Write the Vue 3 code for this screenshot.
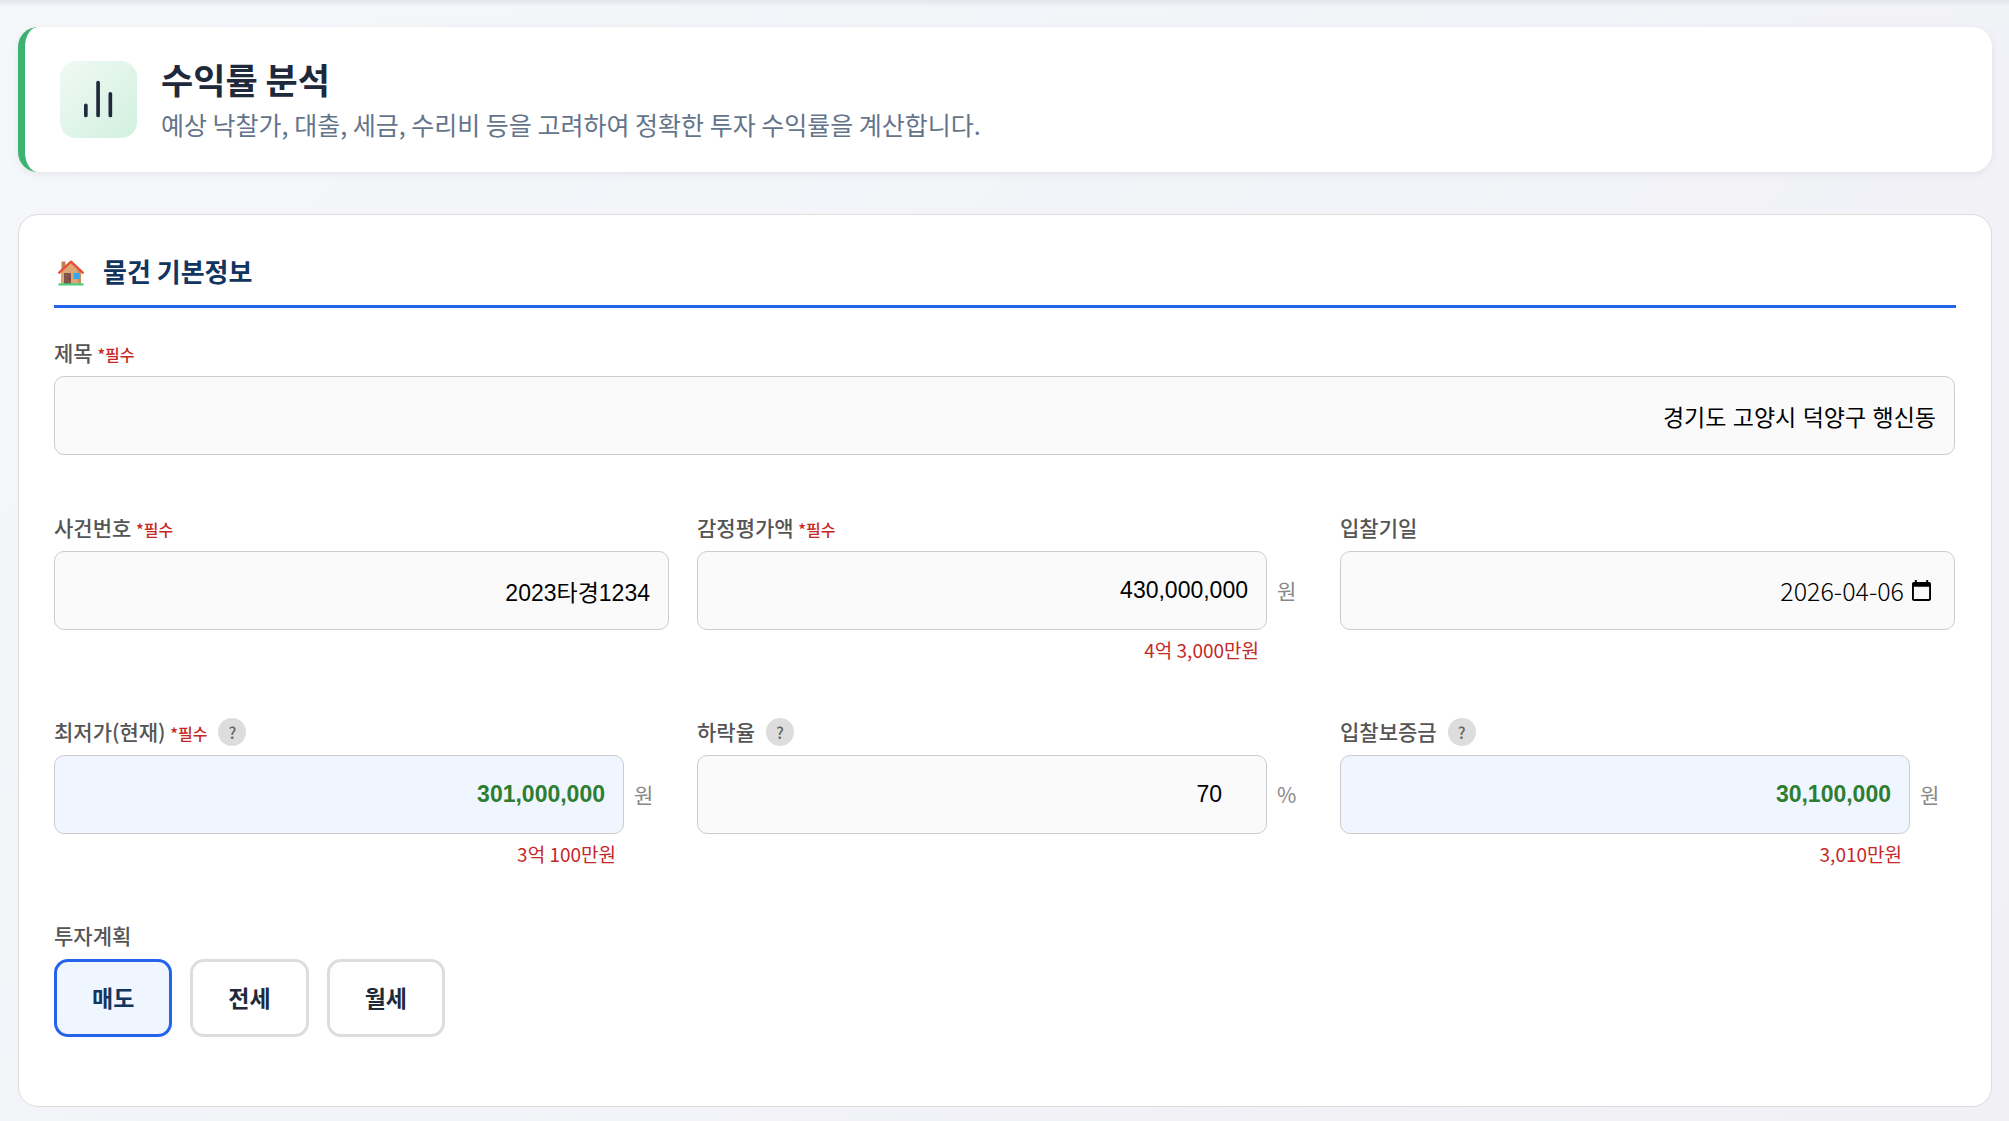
<script setup>
import { reactive, ref } from "vue";

// data
const form = reactive({
  title: "경기도 고양시 덕양구 행신동",
  caseNumber: "2023타경1234",
  appraisal: "430,000,000",
  bidDate: "2026-04-06",
  lowest: "301,000,000",
  rate: "70",
  deposit: "30,100,000",
});
const plans = ["매도", "전세", "월세"];
const plan = ref("매도");
</script>

<template>
  <main class="page">
    <header class="hero">
      <div class="hero__icon">
        <svg viewBox="0 0 24 24" aria-hidden="true">
          <path d="M5.800 19.800v-5M11.800 19.800V3.700M17.800 19.800V9.200" />
        </svg>
      </div>
      <div class="hero__body">
        <h1 class="hero__title">수익률 분석</h1>
        <p class="hero__text">
          예상 낙찰가, 대출, 세금, 수리비 등을 고려하여 정확한 투자 수익률을
          계산합니다.
        </p>
      </div>
    </header>

    <form class="card" @submit.prevent>
      <h2 class="card__title">
        <svg class="card__icon" viewBox="0 -4 26 30" aria-hidden="true">
          <path d="M3.500 1.500h4v9h-4z" fill="#b98555" />
          <path d="M3 11.500 13 2.500l10 9V24H3z" fill="#dda673" />
          <path d="M19 9h4v15h-3z" fill="#c98f60" />
          <path
            d="M1.300 12.700 13 1.700l11.700 11"
            fill="none"
            stroke="#e8503a"
            stroke-width="2.400"
            stroke-linecap="round"
            stroke-linejoin="round"
          />
          <path d="M6 13h7v11H6z" fill="#845349" />
          <circle cx="11.300" cy="18.500" r="0.800" fill="#4e3436" />
          <path d="M15.500 13h6v6h-6z" fill="#35a7ef" />
          <path d="M.5 23.300h25v2.200H.5z" fill="#4ad07d" />
        </svg>
        물건 기본정보
      </h2>

      <div class="grid">
        <div class="field field--wide">
          <div class="field__head">
            <label class="field__label" for="title"
              >제목 <span class="required">*필수</span></label
            >
          </div>
          <input id="title" v-model="form.title" class="input" type="text" />
        </div>

        <div class="field">
          <div class="field__head">
            <label class="field__label" for="case-number"
              >사건번호 <span class="required">*필수</span></label
            >
          </div>
          <input
            id="case-number"
            v-model="form.caseNumber"
            class="input"
            type="text"
          />
        </div>
        <div class="field">
          <div class="field__head">
            <label class="field__label" for="appraisal"
              >감정평가액 <span class="required">*필수</span></label
            >
          </div>
          <div class="field__row">
            <input
              id="appraisal"
              v-model="form.appraisal"
              class="input"
              type="text"
            />
            <span class="unit">원</span>
          </div>
          <p class="hint">4억 3,000만원</p>
        </div>
        <div class="field">
          <div class="field__head">
            <label class="field__label" for="bid-date">입찰기일</label>
          </div>
          <div class="input date">
            <input
              id="bid-date"
              v-model="form.bidDate"
              class="date__input"
              type="text"
            />
            <button class="date__button" type="button" aria-label="달력">
              <svg viewBox="0 0 20 22" aria-hidden="true">
                <path
                  d="M18 2h-1V0h-2v2H5V0H3v2H2C.9 2 0 2.900 0 4v16c0 1.100.9 2 2 2h16c1.100 0 2-.9 2-2V4c0-1.100-.9-2-2-2zm0 18H2V7h16z"
                />
              </svg>
            </button>
          </div>
        </div>

        <div class="field">
          <div class="field__head">
            <label class="field__label" for="lowest"
              >최저가(현재) <span class="required">*필수</span></label
            >
            <button class="help" type="button">?</button>
          </div>
          <div class="field__row">
            <input
              id="lowest"
              v-model="form.lowest"
              class="input input--result"
              type="text"
            />
            <span class="unit">원</span>
          </div>
          <p class="hint">3억 100만원</p>
        </div>
        <div class="field">
          <div class="field__head">
            <label class="field__label" for="rate">하락율</label>
            <button class="help" type="button">?</button>
          </div>
          <div class="field__row">
            <input
              id="rate"
              v-model="form.rate"
              class="input input--number"
              type="text"
            />
            <span class="unit">%</span>
          </div>
        </div>
        <div class="field">
          <div class="field__head">
            <label class="field__label" for="deposit">입찰보증금</label>
            <button class="help" type="button">?</button>
          </div>
          <div class="field__row">
            <input
              id="deposit"
              v-model="form.deposit"
              class="input input--result"
              type="text"
            />
            <span class="unit">원</span>
          </div>
          <p class="hint">3,010만원</p>
        </div>

        <div class="field field--wide">
          <div class="field__head">
            <span id="plan-label" class="field__label">투자계획</span>
          </div>
          <div class="plans" role="group" aria-labelledby="plan-label">
            <button
              v-for="item in plans"
              :key="item"
              class="plan"
              :class="{ 'plan--active': item === plan }"
              :aria-pressed="item === plan"
              type="button"
              @click="plan = item"
            >
              {{ item }}
            </button>
          </div>
        </div>
      </div>
    </form>
  </main>
</template>

<style>
body {
  background: linear-gradient(135deg, #f5f7fb, #f0f0f5);
}
</style>

<style scoped>
* {
  box-sizing: border-box;
}

.page {
  padding: 27px 17px 14px 18px;
  background: linear-gradient(#e2e6ec, transparent) no-repeat top / 100% 7px;
  color: #1e293b;
  font-family: "Noto Sans CJK KR", sans-serif;
}

.hero {
  display: flex;
  align-items: center;
  gap: 24px;
  padding: 26px 35px;
  border-left: 7px solid #3cb371;
  border-radius: 20px;
  background: #fff;
  box-shadow: 0 2px 9px rgba(0, 0, 0, 0.07);
}

.hero__icon {
  display: flex;
  align-items: center;
  justify-content: center;
  width: 77px;
  height: 77px;
  border-radius: 16px;
  background: linear-gradient(135deg, #f0faf4, #d1f0df);
}

.hero__icon svg {
  width: 49px;
  height: 49px;
  fill: none;
  stroke: #1e293b;
  stroke-width: 1.8;
  stroke-linecap: round;
}

.hero__body {
  padding-bottom: 2px;
}

.hero__title {
  margin: 0;
  font-size: 35px;
  font-weight: 700;
  line-height: 51px;
}

.hero__text {
  margin: 0;
  color: #64748b;
  font-size: 25px;
  line-height: 40px;
}

.card {
  margin-top: 42px;
  padding: 35px 35px 69px;
  border: 1px solid #ddd;
  border-radius: 20px;
  background: #fff;
}

.card__title {
  display: flex;
  align-items: center;
  gap: 19px;
  margin: 0 0 29px;
  padding: 0 0 14px 4px;
  border-bottom: 3px solid #2563eb;
  color: #12355f;
  font-size: 26px;
  font-weight: 700;
  line-height: 41px;
}

.card__icon {
  width: 26px;
  height: 30px;
}

.grid {
  display: grid;
  grid-template-columns: repeat(3, 1fr);
  gap: 57px 28px;
  padding-right: 1px;
}

.field--wide {
  grid-column: 1 / -1;
}

.field__head {
  display: flex;
  align-items: center;
  gap: 11px;
  height: 31px;
  margin-bottom: 8px;
}

.field__label {
  padding-bottom: 2px;
  color: #555;
  font-size: 21px;
  font-weight: 500;
}

.required {
  color: #c62828;
  font-size: 16px;
}

.help {
  width: 28px;
  height: 28px;
  padding: 0;
  border: 0;
  border-radius: 50%;
  background: #ddd;
  color: #666;
  font-family: inherit;
  font-size: 16px;
  font-weight: 500;
}

.field__row {
  display: flex;
  align-items: center;
  gap: 10px;
}

.input {
  display: block;
  flex: 1;
  width: 100%;
  min-width: 0;
  height: 79px;
  padding: 0 18px;
  border: 1px solid #ccc;
  border-radius: 10px;
  background: #fafafa;
  color: #000;
  font-family: "Liberation Sans", "Noto Sans CJK KR", sans-serif;
  font-size: 23px;
  text-align: right;
}

.input--result {
  background: #eff6ff;
  color: #2e7d32;
  font-weight: 700;
}

.input--number {
  padding-right: 44px;
}

.unit {
  width: 35px;
  padding-bottom: 2px;
  color: #888;
  font-size: 21px;
}

.hint {
  margin: 10px 53px 0 0;
  color: #c62828;
  font-size: 19px;
  line-height: 19px;
  text-align: right;
}

.date {
  display: flex;
  align-items: center;
  gap: 8px;
  padding-right: 23px;
}

.date__input {
  flex: 1;
  min-width: 0;
  padding: 0 0 2px;
  border: 0;
  background: none;
  color: inherit;
  font-family: "Noto Sans CJK KR", sans-serif;
  font-size: 25px;
  font-weight: 300;
  text-align: right;
}

.date__button {
  display: flex;
  padding: 0;
  border: 0;
  background: none;
}

.date__button svg {
  width: 19px;
  height: 21px;
}

.plans {
  display: flex;
  gap: 18px;
}

.plan {
  height: 78px;
  padding: 0 35px 2px;
  border: 3px solid #ddd;
  border-radius: 14px;
  background: #fff;
  color: #1e293b;
  font-family: inherit;
  font-size: 23px;
  font-weight: 700;
}

.plan--active {
  border-color: #2563eb;
  background: #eff6ff;
  color: #12355f;
}
</style>
